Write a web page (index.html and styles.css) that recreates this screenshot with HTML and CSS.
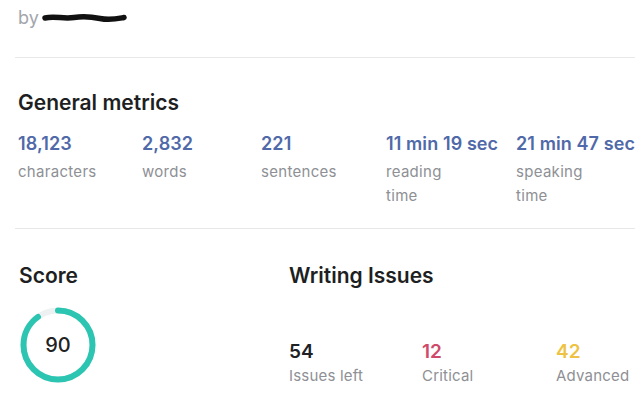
FILE: index.html
```html
<!DOCTYPE html>
<html>
<head>
<meta charset="utf-8">
<link rel="stylesheet" href="styles.css">
</head>
<body>
<div class="page">
  <div class="byline">
    <span class="by">by</span>
    <svg class="scribble" width="86" height="12" viewBox="0 0 86 12">
      <path d="M3 6 C12 4, 22 7, 32 5.5 S48 4.5, 58 6.5 S74 7, 82 5.5" stroke="#111" stroke-width="5.5" fill="none" stroke-linecap="round"/>
    </svg>
  </div>
  <hr class="sep sep-top">
  <section class="metrics">
    <h2 class="title">General metrics</h2>
    <div class="metric-grid">
      <div class="metric"><div class="value">18,123</div><div class="label">characters</div></div>
      <div class="metric"><div class="value">2,832</div><div class="label">words</div></div>
      <div class="metric"><div class="value">221</div><div class="label">sentences</div></div>
      <div class="metric"><div class="value">11 min 19 sec</div><div class="label">reading<br>time</div></div>
      <div class="metric"><div class="value">21 min 47 sec</div><div class="label">speaking<br>time</div></div>
    </div>
  </section>
  <hr class="sep sep-mid">
  <section class="bottom">
    <div class="score">
      <h2 class="title">Score</h2>
      <div class="ring">
        <svg width="78" height="78" viewBox="0 0 78 78">
          <circle cx="39" cy="39" r="34.5" stroke="#eef1f1" stroke-width="6" fill="none"/>
          <circle cx="39" cy="39" r="34.5" stroke="#2cc5b2" stroke-width="6" fill="none"
            stroke-linecap="round" stroke-dasharray="195.1 216.8" transform="rotate(-90 39 39)"/>
        </svg>
        <span class="ring-num">90</span>
      </div>
    </div>
    <div class="issues">
      <h2 class="title">Writing Issues</h2>
      <div class="issue-grid">
        <div class="issue"><div class="inum dark">54</div><div class="ilabel">Issues left</div></div>
        <div class="issue"><div class="inum red">12</div><div class="ilabel">Critical</div></div>
        <div class="issue"><div class="inum yellow">42</div><div class="ilabel">Advanced</div></div>
      </div>
    </div>
  </section>
</div>
</body>
</html>
```
FILE: styles.css
```css
* { box-sizing: border-box; }
html, body { margin: 0; padding: 0; background: #fff; }
body {
  font-family: Inter, "Noto Sans", "Liberation Sans", sans-serif;
  color: #222;
  width: 643px;
  height: 400px;
  overflow: hidden;
}
.page { padding: 0 8px 0 15px; }
.byline {
  display: flex;
  align-items: center;
  gap: 3px;
  padding: 6px 0 0 3px;
  height: 30px;
}
.by { font-size: 18px; color: #a3a6ab; line-height: 20px; }
.sep { border: 0; border-top: 1px solid #e8e8e8; margin: 0; }
.sep-top { margin-top: 27px; }
.title {
  margin: 0;
  font-size: 21px;
  line-height: 24px;
  font-weight: 600;
  color: #1e1f22;
}
.metrics { padding: 33px 0 0 3px; height: 170px; }
.metric-grid {
  display: grid;
  grid-template-columns: 124px 119px 125px 130px 1fr;
  margin-top: 17px;
}
.value {
  font-size: 18px;
  line-height: 24px;
  font-weight: 600;
  color: #5069a8;
  letter-spacing: 0.1px;
  white-space: nowrap;
}
.label {
  margin-top: 4px;
  font-size: 15px;
  line-height: 24px;
  color: #8e9095;
  letter-spacing: 0.3px;
}
.bottom { display: grid; grid-template-columns: 270px 1fr; padding: 35px 0 0 4px; }
.ring { position: relative; width: 78px; height: 78px; margin: 18px 0 0 0; }
.ring svg { display: block; }
.ring-num {
  position: absolute; inset: 0;
  display: flex; align-items: center; justify-content: center;
  font-size: 20px; font-weight: 500; color: #222;
}
.issue-grid {
  display: grid;
  grid-template-columns: 133px 134px 1fr;
  margin-top: 52px;
}
.inum { font-size: 19px; line-height: 24px; font-weight: 600; }
.dark { color: #202124; }
.red { color: #cf4a6a; }
.yellow { color: #eec243; }
.ilabel { font-size: 15px; line-height: 24px; color: #8e9095; letter-spacing: 0.2px; }
```
